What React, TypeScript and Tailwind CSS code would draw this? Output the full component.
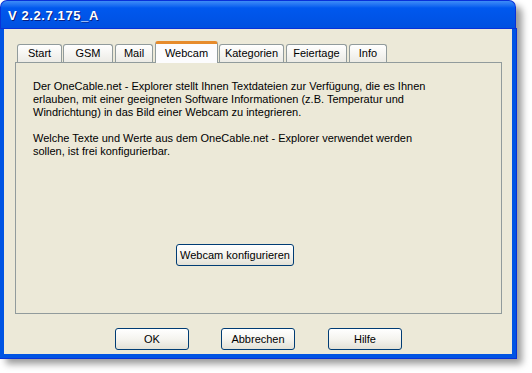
const tabs = [
  { label: "Start", w: "w-[45px]", ml: "ml-[2px]" },
  { label: "GSM", w: "w-[50px]", ml: "ml-[1px]" },
  { label: "Mail", w: "w-[38px]", ml: "ml-[2px]" },
  { label: "Webcam", w: "w-[63px]", ml: "ml-[2px]", active: true },
  { label: "Kategorien", w: "w-[65px]", ml: "ml-[1px]" },
  { label: "Feiertage", w: "w-[61px]", ml: "ml-[2px]" },
  { label: "Info", w: "w-[38px]", ml: "ml-[2px]" },
];

function XpButton({ label, className }: { label: string; className: string }) {
  return (
    <button
      className={`h-[22px] rounded-[3px] border border-[#003c74] bg-gradient-to-b from-white via-[#f5f4ef] to-[#e3e1d6] text-[11px] leading-none text-black ${className}`}
    >
      {label}
    </button>
  );
}

export default function App() {
  return (
    <div className="w-[532px] h-[373px] bg-white font-['Liberation_Sans',Arial,sans-serif] overflow-hidden">
      <div className="w-[516px] h-[358px] flex flex-col rounded-t-[7px] shadow-[6px_6px_7px_rgba(0,0,0,0.4)]">
        {/* title bar */}
        <div className="h-[29px] rounded-t-[7px] border border-b-0 border-[#0831d9] bg-gradient-to-b from-[#3d8cf7] via-[#0058ee] via-25% to-[#0050e0] flex items-center pl-[7px] pt-[2px]">
          <span className="text-white font-bold text-[13px] tracking-[0.6px] [text-shadow:1px_1px_0_#0a1f80]">
            V 2.2.7.175_A
          </span>
        </div>

        {/* client */}
        <div className="flex-1 border-x-4 border-b-4 border-[#0054e3] outline outline-1 outline-[#0831d9] bg-[#ece9d8] pt-[12px] px-[11px] flex flex-col">
          <div className="flex items-end h-[21px] relative z-10">
            {tabs.map((t) =>
              t.active ? (
                <div
                  key={t.label}
                  className={`${t.w} ${t.ml} h-[22px] -mb-[1px] border-x border-[#919b9c] border-t-[3px] border-t-[#e68b2c] rounded-t-[3px] bg-[#fcfcfe] flex items-center justify-center text-[11px] text-black pb-[1px]`}
                >
                  {t.label}
                </div>
              ) : (
                <div
                  key={t.label}
                  className={`${t.w} ${t.ml} h-[18px] border border-b-0 border-[#919b9c] rounded-t-[3px] bg-gradient-to-b from-white to-[#ecebe5] flex items-center justify-center text-[11px] text-black`}
                >
                  {t.label}
                </div>
              )
            )}
          </div>

          <div className="w-[487px] h-[252px] border border-[#919b9c] bg-[#ece9d8] pl-[17px] pt-[17px] text-[11px] leading-[13px] text-black whitespace-nowrap">
            <p>
              Der OneCable.net - Explorer stellt Ihnen Textdateien zur Verfügung, die es Ihnen
              <br />
              erlauben, mit einer geeigneten Software Informationen (z.B. Temperatur und
              <br />
              Windrichtung) in das Bild einer Webcam zu integrieren.
            </p>
            <p className="mt-[13px]">
              Welche Texte und Werte aus dem OneCable.net - Explorer verwendet werden
              <br />
              sollen, ist frei konfigurierbar.
            </p>
            <XpButton label="Webcam konfigurieren" className="mt-[86px] ml-[143px] w-[118px]" />
          </div>

          <div className="flex mt-[14px]">
            <XpButton label="OK" className="ml-[100px] w-[74px]" />
            <XpButton label="Abbrechen" className="ml-[32px] w-[74px]" />
            <XpButton label="Hilfe" className="ml-[33px] w-[74px]" />
          </div>
        </div>
      </div>
    </div>
  );
}
